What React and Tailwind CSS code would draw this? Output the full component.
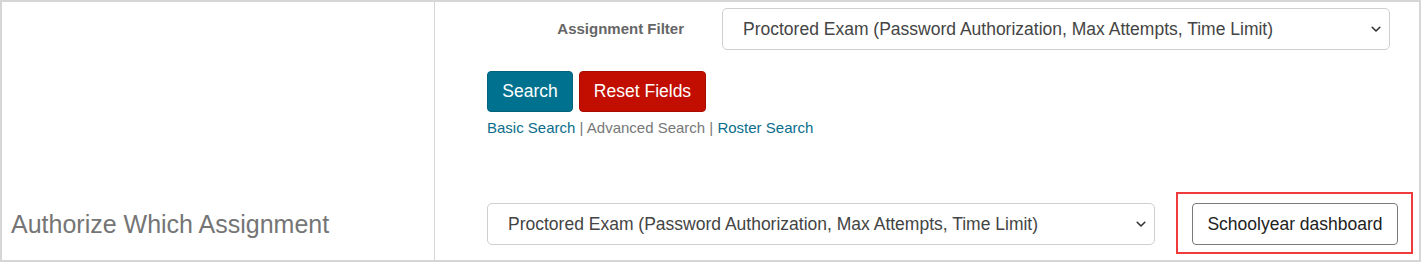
import React from "react";

function Chevron() {
  return (
    <svg width="10" height="7" viewBox="0 0 10 7" className="shrink-0">
      <path d="M1.2 1.3 L5 5 L8.8 1.3" fill="none" stroke="#333" strokeWidth="1.6" strokeLinecap="round" strokeLinejoin="round" />
    </svg>
  );
}

function SelectBox() {
  return (
    <div className="flex h-[42px] w-[668px] items-center justify-between rounded-[5px] border border-[#cfcfcf] bg-white pl-[20px] pr-[8px] text-[17.5px] text-[#444]">
      <span className="whitespace-nowrap">Proctored Exam (Password Authorization, Max Attempts, Time Limit)</span>
      <Chevron />
    </div>
  );
}

export default function App() {
  return (
    <div
      className="flex h-[262px] w-[1421px] border-2 border-[#d6d6d6] bg-white"
      style={{ fontFamily: '"Liberation Sans", Arial, sans-serif' }}
    >
      <div className="flex w-[433px] shrink-0 flex-col justify-end border-r border-[#d6d6d6] pb-[21px] pl-[9px]">
        <span className="text-[25px] leading-[30px] text-[#757575]">Authorize Which Assignment</span>
      </div>
      <div className="flex flex-1 flex-col">
        <div className="flex items-center pt-[6px]">
          <div className="w-[249px] text-right text-[15px] font-bold text-[#666]">Assignment Filter</div>
          <div className="ml-[38px]">
            <SelectBox />
          </div>
        </div>
        <div className="mt-[21px] flex gap-[6px] pl-[52px]">
          <button className="h-[41px] w-[86px] rounded-[4px] border border-[#00627b] bg-[#00728f] text-[17.5px] text-white">
            Search
          </button>
          <button className="h-[41px] w-[127px] rounded-[4px] border border-[#a80c00] bg-[#c20e00] text-[17.5px] text-white">
            Reset Fields
          </button>
        </div>
        <div className="mt-[6px] pl-[52px] text-[15px] leading-[20px] text-[#777]">
          <span className="text-[#0b6e8c]">Basic Search</span>
          <span> | </span>
          <span>Advanced Search</span>
          <span> | </span>
          <span className="text-[#0b6e8c]">Roster Search</span>
        </div>
        <div className="mt-[54px] flex items-start pl-[52px]">
          <div className="mt-[11px]">
            <SelectBox />
          </div>
          <div className="ml-[21px] border-2 border-[#ef3b3b] pb-[7px] pl-[14px] pr-[13px] pt-[9px]">
            <button className="h-[42px] w-[206px] rounded-[4px] border border-[#7a7a7a] bg-white text-[17.5px] text-[#222]">
              Schoolyear dashboard
            </button>
          </div>
        </div>
      </div>
    </div>
  );
}
